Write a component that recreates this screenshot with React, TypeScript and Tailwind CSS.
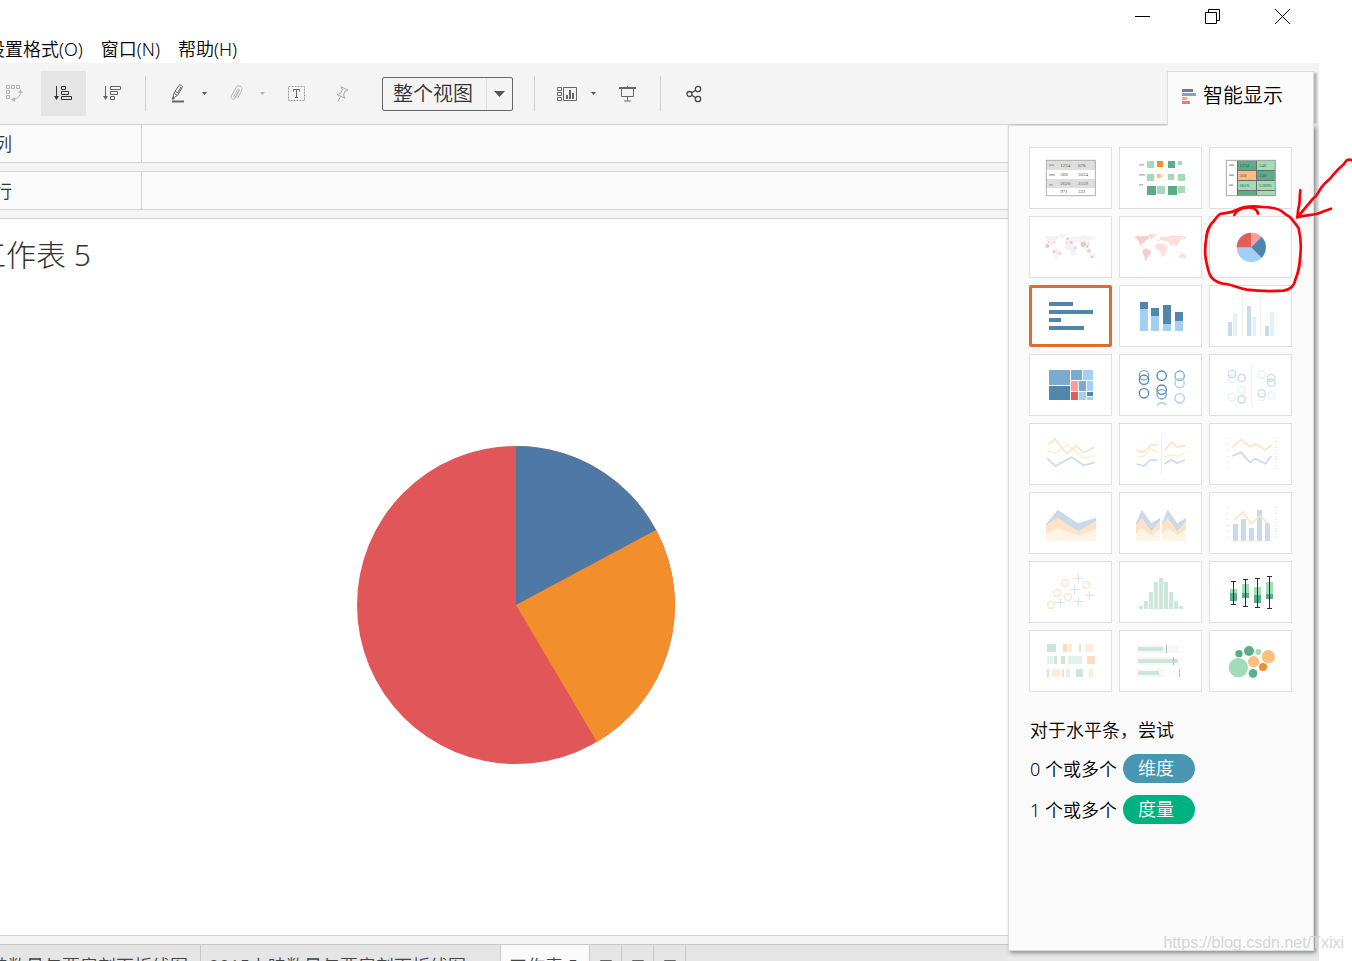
import type { ReactNode } from "react";
import clsx from "clsx";

const DARK_BLUE = "#5086ae";
const MID_BLUE = "#7baacf";
const LIGHT_BLUE = "#a5cff0";
const DARK_GREEN = "#59ad8a";
const LIGHT_GREEN = "#a0dcb6";
const PEACH = "#ffbe7d";
const ORANGE = "#f28e2b";
const PALE_BLUE = "#cbdae8";
const PALE_SKY = "#e3f1fc";
const PALE_ORANGE = "#fee3c8";
const PALE_YELLOW = "#fff0d4";
const PALE_GREEN = "#cde6dc";

const WORLD =
  "M48 62l6-3 9 3 9-2 8 1 6-2 5 6-2 5-6 1-4 5-4 5-5 1-3 5 5 5 6 4-6-2-9-8-4-10-4-6-4-4zM88 57l8-3 17 0-3 7-9 6-5 2-3-7zM73 99l10-1 13 8-2 9-8 8-5 13-3-3-1-12-7-12zM111 84l8-2 13 1 8 5 7 7-4 5-3 14-6 7-5 1-5-12-4-8-8-2-4-6zM113 78l2-6 5-1 4-8 8-3 6 3 12-2 14-4 12 3 14 0 12 3-2 5-6 0-5 6-2-4-5 3-1 8-6 3-3 10-5-7-4-4-3 10-5-7-6-7-8-3-8-1-4-3-7 2zM177 66l7 4-2 8-3-5zM170 104l5 4-4 2zM178 108l8 0 0 3zM181 119l5-5 5-1 3-2 6 7 2 6-6 4-6-4-9 2z";

type Rect = [number, number, number, number, string];

const Rects = ({ items }: { items: Rect[] }) => (
  <>
    {items.map(([x, y, w, h, fill]) => (
      <rect key={`${x}-${y}-${w}`} x={x} y={y} width={w} height={h} fill={fill} />
    ))}
  </>
);

type Circle = [number, number, number, string];

const Dots = ({ items }: { items: Circle[] }) => (
  <>
    {items.map(([cx, cy, r, fill]) => (
      <circle key={`${cx}-${cy}`} cx={cx} cy={cy} r={r} fill={fill} />
    ))}
  </>
);

const Rings = ({ items }: { items: Circle[] }) => (
  <>
    {items.map(([cx, cy, r, stroke]) => (
      <circle key={`${cx}-${cy}`} cx={cx} cy={cy} r={r} fill="none" stroke={stroke} strokeWidth="4" />
    ))}
  </>
);

const Line = ({ points, color }: { points: string; color: string }) => (
  <polyline points={points} fill="none" stroke={color} strokeWidth="5" />
);

const Divider = ({ x }: { x: number }) => <rect x={x - 1} y="33" width="3" height="120" fill="#eeeeee" />;

const Labels = ({ items }: { items: [number, number, string][] }) => (
  <g fontSize="15" fill="#555555" fontFamily="Liberation Serif, serif">
    {items.map(([x, y, text]) => (
      <text key={`${x}-${y}`} x={x} y={y}>
        {text}
      </text>
    ))}
  </g>
);

// axis ticks left and right of the dual charts
const Ticks = () => (
  <path
    d="M51 46h9M51 64h9M51 82h9M51 100h9M51 118h9M51 136h9M195 46h9M195 55h9M195 64h9M195 73h9M195 82h9M195 91h9M195 100h9M195 109h9M195 118h9M195 127h9M195 136h9"
    stroke="#ececec"
    strokeWidth="3"
  />
);

const charts: { name: string; art: ReactNode }[] = [
  {
    name: "文本表",
    art: (
      <>
        <Rects items={[[51, 39, 150, 30, "#dedede"], [51, 96, 150, 27, "#dedede"], [60, 52, 15, 5, "#b0b0b0"], [60, 81, 18, 5, "#b0b0b0"], [60, 111, 12, 5, "#b0b0b0"]]} />
        <rect x="52" y="40" width="147" height="106" fill="none" stroke="#b0b0b0" strokeWidth="3" />
        <Labels items={[[94, 61, "1234"], [147, 61, "678"], [94, 88, "368"], [147, 88, "3034"], [94, 115, "2620"], [147, 115, "2559"], [94, 139, "971"], [147, 139, "322"]]} />
      </>
    ),
  },
  {
    name: "热图",
    art: (
      <Rects
        items={[
          [60, 51, 15, 5, "#bfbfbf"], [60, 81, 18, 5, "#bfbfbf"], [60, 111, 12, 5, "#bfbfbf"],
          [84, 42, 21, 21, LIGHT_GREEN], [114, 42, 18, 18, ORANGE], [147, 42, 21, 21, DARK_GREEN], [177, 42, 12, 12, LIGHT_GREEN],
          [84, 81, 21, 21, LIGHT_GREEN], [114, 81, 12, 12, PEACH], [147, 81, 18, 18, LIGHT_GREEN], [177, 81, 21, 21, LIGHT_GREEN],
          [84, 117, 27, 27, DARK_GREEN], [114, 117, 24, 24, LIGHT_GREEN], [147, 117, 27, 27, DARK_GREEN], [177, 117, 21, 21, LIGHT_GREEN],
        ]}
      />
    ),
  },
  {
    name: "突出显示表",
    art: (
      <>
        <Rects
          items={[
            [84, 40, 116, 107, "#6f6f6f"],
            [60, 52, 15, 5, "#b0b0b0"], [60, 82, 15, 5, "#b0b0b0"], [60, 112, 12, 5, "#b0b0b0"],
            [87, 42, 54, 27, DARK_GREEN], [144, 42, 54, 27, LIGHT_GREEN],
            [87, 72, 54, 27, PEACH], [144, 72, 54, 27, DARK_GREEN],
            [87, 102, 54, 27, LIGHT_GREEN], [144, 102, 54, 27, LIGHT_GREEN],
            [87, 132, 54, 12, DARK_GREEN], [144, 132, 54, 12, LIGHT_GREEN],
          ]}
        />
        <rect x="52" y="40" width="147" height="106" fill="none" stroke="#a8a8a8" strokeWidth="3" />
        <Labels items={[[91, 60, "1234"], [150, 60, "546"], [91, 91, "368"], [150, 91, "340"], [91, 121, "2620"], [150, 121, "53890"]]} />
      </>
    ),
  },
  {
    name: "符号地图",
    art: (
      <>
        <path d={WORLD} fill="#f3f3f3" />
        <Dots
          items={[
            [55, 90, 6, "#ecc2c6"], [58, 78, 3, "#ecc2c6"], [75, 80, 4, "#f8d7d7"], [116, 68, 5, "#f2cfd1"], [113, 80, 4, "#f8d7d7"],
            [127, 79, 5, "#ecc2c6"], [75, 107, 4, "#ecc2c6"], [93, 112, 5, "#f8d7d7"], [138, 96, 4, "#f5cfd0"], [163, 85, 8, "#ecc2c6"],
            [175, 92, 4, "#ecc2c6"], [180, 104, 6, "#f5cfd0"], [178, 84, 3, "#f5cfd0"], [189, 123, 4, "#f0c5c8"],
          ]}
        />
      </>
    ),
  },
  {
    name: "地图",
    art: (
      <>
        <path d={WORLD} fill="#ffdedd" />
        <path d={WORLD} fill="#f6cfcd" clipPath="inset(0 105px 0 0)" />
      </>
    ),
  },
  {
    name: "饼图",
    art: (
      <>
        <circle cx="127" cy="94" r="44" fill={LIGHT_BLUE} />
        <path d="M127 94H83A44 44 0 0 1 127 50Z" fill="#e15f56" />
        <path d="M127 94V50A44 44 0 0 1 158 63Z" fill="#ff9d9a" />
        <path d="M127 94L158 63A44 44 0 0 1 158 125Z" fill={DARK_BLUE} />
      </>
    ),
  },
  {
    name: "水平条",
    art: <Rects items={[[60, 51, 72, 12, DARK_BLUE], [60, 75, 132, 12, DARK_BLUE], [60, 99, 36, 12, DARK_BLUE], [60, 123, 105, 12, DARK_BLUE]]} />,
  },
  {
    name: "堆叠条",
    art: (
      <Rects
        items={[
          [63, 51, 24, 21, DARK_BLUE], [63, 72, 24, 66, LIGHT_BLUE], [96, 69, 24, 24, DARK_BLUE], [96, 93, 24, 45, LIGHT_BLUE],
          [132, 60, 24, 57, DARK_BLUE], [132, 117, 24, 21, LIGHT_BLUE], [168, 81, 24, 27, DARK_BLUE], [168, 108, 24, 30, LIGHT_BLUE],
        ]}
      />
    ),
  },
  {
    name: "并排条",
    art: (
      <>
        <Divider x={100} />
        <Divider x={154} />
        <Rects
          items={[
            [57, 111, 12, 42, PALE_BLUE], [72, 84, 12, 69, PALE_SKY], [114, 63, 12, 90, PALE_BLUE],
            [129, 96, 12, 57, PALE_SKY], [168, 123, 12, 30, PALE_BLUE], [183, 81, 12, 72, PALE_SKY],
          ]}
        />
      </>
    ),
  },
  {
    name: "树状图",
    art: (
      <Rects
        items={[
          [60, 48, 63, 45, MID_BLUE], [60, 96, 63, 42, DARK_BLUE], [126, 48, 33, 30, MID_BLUE], [162, 48, 30, 30, LIGHT_BLUE],
          [126, 81, 21, 30, "#ff9d9a"], [150, 81, 21, 30, MID_BLUE], [174, 81, 18, 30, LIGHT_BLUE], [126, 114, 21, 24, "#e15f56"],
          [150, 114, 21, 24, LIGHT_BLUE], [174, 114, 18, 12, DARK_BLUE], [174, 129, 18, 9, LIGHT_BLUE],
        ]}
      />
    ),
  },
  {
    name: "圆视图",
    art: (
      <>
        <Rings
          items={[
            [75, 64, 14, MID_BLUE], [75, 77, 14, DARK_BLUE], [75, 118, 14, DARK_BLUE], [128, 65, 14, DARK_BLUE], [128, 107, 14, DARK_BLUE],
            [128, 121, 14, MID_BLUE], [182, 65, 14, MID_BLUE], [182, 87, 14, LIGHT_BLUE], [182, 133, 14, LIGHT_BLUE],
          ]}
        />
        <path d="M115 155a14 12 0 0 1 27 0" fill="none" stroke={LIGHT_BLUE} strokeWidth="4" />
      </>
    ),
  },
  {
    name: "并排圆",
    art: (
      <>
        <Divider x={127} />
        <Rings
          items={[
            [69, 74, 11, PALE_SKY], [69, 60, 11, PALE_BLUE], [98, 72, 11, PALE_BLUE], [98, 107, 11, PALE_SKY], [69, 130, 11, PALE_SKY],
            [98, 136, 11, PALE_BLUE], [158, 61, 11, PALE_SKY], [187, 86, 11, PALE_BLUE], [187, 72, 11, PALE_BLUE], [158, 129, 11, PALE_SKY],
            [158, 118, 11, PALE_BLUE], [187, 124, 11, PALE_SKY],
          ]}
        />
      </>
    ),
  },
  {
    name: "线(连续)",
    art: (
      <>
        <Line points="55,83 79,91 113,65 165,106 197,98" color={PALE_YELLOW} />
        <Line points="57,65 78,48 113,92 142,69 164,89 197,73" color={PALE_ORANGE} />
        <Line points="55,106 79,129 128,103 165,127 197,118" color={PALE_BLUE} />
      </>
    ),
  },
  {
    name: "线(离散)",
    art: (
      <>
        <Divider x={127} />
        <Line points="53,82 75,87 96,65 116,67" color={PALE_ORANGE} />
        <Line points="53,103 75,99 96,77 115,90" color={PALE_YELLOW} />
        <Line points="53,123 75,129 94,111 116,112" color={PALE_BLUE} />
        <Line points="137,82 157,58 175,72 198,68" color={PALE_ORANGE} />
        <Line points="135,103 158,95 177,100 198,88" color={PALE_YELLOW} />
        <Line points="137,123 157,110 175,120 198,111" color={PALE_BLUE} />
      </>
    ),
  },
  {
    name: "双线",
    art: (
      <>
        <Ticks />
        <Line points="70,73 96,50 123,72 139,62 169,81 187,66" color={PALE_ORANGE} />
        <Line points="70,99 96,88 123,118 139,107 169,122 187,99" color={PALE_BLUE} />
      </>
    ),
  },
  {
    name: "面积图(连续)",
    art: (
      <>
        <path d="M51 96L86 53L147 94L201 77V147H51Z" fill={PALE_BLUE} />
        <path d="M51 100L86 77L148 118L201 86V147H51Z" fill={PALE_ORANGE} />
        <path d="M51 124L86 109L148 130L201 112V147H51Z" fill="#fff4e6" />
      </>
    ),
  },
  {
    name: "面积图(离散)",
    art: (
      <>
        <path d="M51 94L68 53L97 94L123 77V147H51ZM129 94L146 53L175 94L201 77V147H129Z" fill={PALE_BLUE} />
        <path d="M51 100L68 77L97 118L123 86V147H51ZM129 100L146 77L175 118L201 86V147H129Z" fill={PALE_ORANGE} />
        <path d="M51 124L68 109L97 130L123 112V147H51ZM129 124L146 109L175 130L201 112V147H129Z" fill="#fff4e6" />
      </>
    ),
  },
  {
    name: "双组合",
    art: (
      <>
        <Ticks />
        <Rects items={[[72, 96, 15, 51, PALE_BLUE], [96, 81, 15, 66, PALE_BLUE], [120, 108, 15, 39, PALE_BLUE], [144, 54, 15, 93, PALE_BLUE], [168, 93, 15, 54, PALE_BLUE]]} />
        <Line points="76,85 102,60 127,96 152,71 181,97" color={PALE_ORANGE} />
      </>
    ),
  },
  {
    name: "散点图",
    art: (
      <>
        <Rings items={[[66, 132, 10, PALE_ORANGE], [84, 96, 10, PALE_ORANGE], [117, 108, 10, PALE_ORANGE], [108, 66, 10, PALE_ORANGE], [171, 72, 10, PALE_ORANGE]]} />
        <path
          d="M81 124h27M94 111v27M123 85h27M136 72v27M135 52h27M148 39v27M168 103h27M181 90v27M135 121h27M148 108v27"
          stroke={PALE_GREEN}
          strokeWidth="3"
        />
      </>
    ),
  },
  {
    name: "直方图",
    art: (
      <Rects
        items={[
          [60, 135, 12, 9, PALE_GREEN], [75, 120, 12, 24, PALE_GREEN], [90, 93, 12, 51, PALE_GREEN], [105, 63, 12, 81, PALE_GREEN], [120, 51, 12, 93, PALE_GREEN],
          [135, 63, 12, 81, PALE_GREEN], [150, 93, 12, 51, PALE_GREEN], [165, 120, 12, 24, PALE_GREEN], [180, 135, 12, 9, PALE_GREEN],
        ]}
      />
    ),
  },
  {
    name: "盒须图",
    art: (
      <>
        <Rects
          items={[
            [63, 84, 21, 12, LIGHT_GREEN], [63, 96, 21, 24, DARK_GREEN], [99, 69, 21, 27, LIGHT_GREEN], [99, 96, 21, 15, DARK_GREEN],
            [135, 78, 21, 24, LIGHT_GREEN], [135, 102, 21, 24, DARK_GREEN], [171, 63, 21, 36, LIGHT_GREEN], [171, 99, 21, 15, DARK_GREEN],
          ]}
        />
        <path
          d="M66 61.5h15M66 130.5h15M73.500 61v70M102 55.500h15M102 136.500h15M109.500 55v82M138 52.500h15M138 139.500h15M145.500 52v88M174 46.500h15M174 142.500h15M181.500 46v97"
          stroke="#2f2f2f"
          strokeWidth="3"
        />
      </>
    ),
  },
  {
    name: "甘特图",
    art: (
      <Rects
        items={[
          [54, 42, 27, 24, PALE_GREEN], [102, 42, 12, 24, "#fbdcc0"], [117, 42, 12, 24, "#ffecd8"], [150, 42, 6, 24, "#fbdcc0"], [168, 42, 24, 24, "#ffecd8"],
          [54, 78, 18, 24, "#e1f3e8"], [75, 78, 9, 24, PALE_GREEN], [96, 78, 12, 24, PALE_GREEN], [117, 78, 42, 24, "#e1f3e8"], [174, 78, 24, 24, "#fbdcc0"],
          [54, 117, 6, 24, PALE_GREEN], [69, 117, 24, 24, "#ffecd8"], [99, 117, 6, 24, "#fbdcc0"], [111, 117, 12, 24, "#e1f3e8"], [141, 117, 21, 24, PALE_GREEN], [180, 117, 12, 24, "#ffecd8"],
        ]}
      />
    ),
  },
  {
    name: "标靶图",
    art: (
      <Rects
        items={[
          [57, 45, 138, 24, "#fcfcfc"], [57, 81, 138, 24, "#fcfcfc"], [57, 117, 126, 24, "#fcfcfc"],
          [57, 45, 120, 24, "#f7f7f7"], [57, 81, 105, 24, "#f7f7f7"], [57, 117, 75, 24, "#f7f7f7"],
          [57, 51, 75, 12, PALE_GREEN], [57, 87, 120, 12, PALE_GREEN], [57, 123, 63, 12, PALE_GREEN],
          [141, 45, 3, 24, "#bdbdbd"], [162, 81, 3, 24, "#bdbdbd"], [180, 117, 3, 24, "#bdbdbd"],
        ]}
      />
    ),
  },
  {
    name: "填充气泡图",
    art: (
      <Dots
        items={[
          [88, 113, 29, LIGHT_GREEN], [90, 71, 11, DARK_GREEN], [120, 63, 15, DARK_GREEN], [148, 66, 9, LIGHT_GREEN],
          [178, 80, 20, PEACH], [134, 95, 17, PEACH], [162, 111, 12, ORANGE], [132, 130, 13, DARK_GREEN],
        ]}
      />
    ),
  },
];

const ToolButton = ({ label, children }: { label: string; children: ReactNode }) => (
  <button aria-label={label} className="flex h-8 w-8 items-center justify-center">
    {children}
  </button>
);

const CaretButton = ({ label, muted }: { label: string; muted?: boolean }) => (
  <button aria-label={label} className={clsx("flex h-8 w-5 items-center justify-center", muted ? "text-[#b4b4b4]" : "text-[#555]")}>
    <svg width="5" height="3" viewBox="0 0 5 3" fill="currentColor">
      <path d="M0 0h5L2.500 3z" />
    </svg>
  </button>
);

const Separator = () => <div className="h-[35px] w-px bg-[#d2d2d2]" />;

const SortIcon = ({ descending }: { descending?: boolean }) => (
  <svg width="19" height="15" viewBox="0 0 19 15" fill="none" stroke="currentColor">
    <path d="M2.500 0v11" />
    <path d="M0 10h5L2.500 14z" fill="currentColor" stroke="none" />
    {descending ? <path d="M7.500.5h10v3h-10zM7.500 5.500h7v3h-7zM7.500 10.500h4v3h-4z" /> : <path d="M7.500.5h4v3h-4zM7.500 5.500h7v3h-7zM7.500 10.500h10v3h-10z" />}
  </svg>
);

const Toolbar = () => (
  <div className="flex h-full flex-1 items-center border-b border-[#d2d2d2] text-[#666]">
    <div className="-ml-2 flex gap-1">
      <button aria-label="交换行和列" className="flex size-[45px] items-center justify-center text-[#b4b4b4]">
        <svg width="18" height="18" viewBox="0 0 18 18" fill="none" stroke="currentColor">
          <path d="M.5.5h3v3h-3zM5.500.5h3v3h-3zM10.500.5h3v3h-3zM.5 5.500h3v3h-3zM.5 10.500h3v3h-3zM14.500 7c0 4-3 7-7 7.500" />
          <path d="M12 8h5l-2.500-3.500zM9 12v5l-4-2.500z" fill="currentColor" stroke="none" />
        </svg>
      </button>
      <button aria-label="升序排序" className="flex size-[45px] items-center justify-center bg-[#e5e5e5] text-[#333]">
        <SortIcon />
      </button>
      <button aria-label="降序排序" className="flex size-[45px] items-center justify-center">
        <SortIcon descending />
      </button>
    </div>
    <div className="ml-2.5 flex items-center">
      <Separator />
    </div>
    <div className="ml-4 flex">
      <ToolButton label="突出显示">
        <svg width="14" height="19" viewBox="0 0 14 19" fill="none" stroke="currentColor">
          <path d="M3 9L8 1.200Q8.500.5 9.300 1L11 2Q11.800 2.500 11.300 3.300L6.500 11.500L3 9.300zM3 9.500L2 12.500L3.500 13.500L6 11.500M4.500 7.500L8 9.500M7 8.500L10 3" />
          <path d="M2.200 12.800L1 15h2z" fill="currentColor" />
          <path d="M1 17.500h12" strokeWidth="2" />
        </svg>
      </ToolButton>
      <CaretButton label="突出显示选项" />
    </div>
    <div className="ml-1.5 flex text-[#b4b4b4]">
      <ToolButton label="组成员">
        <svg width="13" height="17" viewBox="0 0 13 17" fill="none" stroke="currentColor" strokeLinecap="round">
          <path d="M4 11L7.500 4.500C8.200 3.300 10 4.200 9.400 5.500L5.500 13C4.200 15.300.2 14 1.500 10.700L6 2.500C7.800-.7 13.200 1.200 11.800 5L8 12.500M4 11C3.500 12.500 5 13 5.500 12L8.500 6" />
        </svg>
      </ToolButton>
      <CaretButton label="组成员选项" muted />
    </div>
    <div className="ml-2 flex gap-3.5">
      <ToolButton label="显示标记标签">
        <svg width="17" height="15" viewBox="0 0 17 15" fill="none" stroke="currentColor">
          <rect x=".5" y=".5" width="16" height="14" stroke="#999" strokeDasharray="2 1" />
          <path d="M5.500 5.500V3.500h6v2M8.500 3.500v8M7 11.500h3" />
        </svg>
      </ToolButton>
      <button aria-label="固定" className="flex h-8 w-8 items-center justify-center text-[#a8a8a8]">
        <svg width="13" height="16" viewBox="0 0 13 16" fill="none" stroke="currentColor">
          <path d="M5 .8L12 4L11 5L9.300 4.800L7.500 9L9 12.200L1 8.500L4.500 7.500L6.300 3.500L5 .8zM4.500 10.500L2 15.500" />
        </svg>
      </button>
    </div>
    <div className="relative ml-6 h-[34px] w-[131px] text-[#333]">
      <select aria-label="适合" className="h-full w-full appearance-none rounded-xs border border-[#666] bg-[#f4f4f4] pl-2.5 text-xl leading-8">
        <option>整个视图</option>
      </select>
      <div className="pointer-events-none absolute inset-y-px right-px flex w-[26px] items-center justify-center border-l border-[#dcdcdc] text-[#555]">
        <svg width="11" height="6" viewBox="0 0 11 6" fill="currentColor">
          <path d="M0 0h11L5.500 6z" />
        </svg>
      </div>
    </div>
    <div className="ml-[21px] flex items-center gap-4">
      <Separator />
      <div className="flex">
        <ToolButton label="显示/隐藏卡">
          <svg width="21" height="14" viewBox="0 0 21 14" fill="none" stroke="currentColor">
            <path d="M.5.5h4v3h-4zM.5 5.500h4v3h-4zM.5 10.500h4v3h-4zM6.500.5h13v13h-13z" />
            <path d="M9 8h2v4H9zM12 3h2v9h-2zM15 6h2v6h-2z" fill="currentColor" stroke="none" />
          </svg>
        </ToolButton>
        <CaretButton label="显示/隐藏卡选项" />
      </div>
    </div>
    <div className="ml-2 flex items-center gap-[17px]">
      <ToolButton label="演示模式">
        <svg width="17" height="16" viewBox="0 0 17 16" fill="none" stroke="currentColor">
          <path d="M0 2h17" strokeWidth="2" />
          <path d="M8.500 0v2M2.500 3v7.500h12V3M8.500 10.500v4M5 15h7" />
        </svg>
      </ToolButton>
      <Separator />
      <button aria-label="共享" className="flex h-8 w-8 items-center justify-center text-[#444]">
        <svg width="16" height="18" viewBox="0 0 16 18" fill="none" stroke="currentColor" strokeWidth="1.300">
          <circle cx="3.500" cy="9" r="2.500" />
          <circle cx="12" cy="4" r="2.700" />
          <circle cx="12" cy="14" r="2.700" />
          <path d="M5.700 7.800L9.700 5.300M5.700 10.200L9.700 12.700" />
        </svg>
      </button>
    </div>
  </div>
);

const Shelf = ({ label }: { label: string }) => (
  <div className="flex h-[38px] items-stretch border-b border-[#d2d2d2] bg-[#fafafa] text-lg">
    <div className="flex w-[142px] items-center border-r border-[#d2d2d2] text-[#333]">
      <span className="-ml-1.5">{label}</span>
    </div>
  </div>
);

const PieChart = () => (
  <svg width="318" height="318" viewBox="-159 -159 318 318">
    <circle r="159" fill="#e15759" />
    <path d="M0 0V-159A159 159 0 0 1 140 -75Z" fill="#4e79a7" />
    <path d="M0 0L140 -75A159 159 0 0 1 81 137Z" fill="#f28e2b" />
  </svg>
);

const SheetTabs = () => (
  <div className="h-[26px] shrink-0 overflow-hidden border-t border-[#d2d2d2] bg-[#f4f4f4] pt-2">
    <div className="flex h-[42px] border-t border-[#c8c8c8] bg-[#e5e5e5] text-lg text-[#444]">
      <button className="flex w-[201px] items-center justify-end border-r border-[#c8c8c8] pr-3 whitespace-nowrap">
        2014上映数量与票房剖面折线图
      </button>
      <button className="flex w-[300px] items-center border-r border-[#c8c8c8] pl-2 whitespace-nowrap">
        2015上映数量与票房剖面折线图
      </button>
      <button className="flex w-[89px] items-center border-r border-[#c8c8c8] bg-[#fafafa] pl-2 whitespace-nowrap">工作表 5</button>
      {["新建工作表", "新建仪表板", "新建故事"].map((label) => (
        <button key={label} aria-label={label} className="flex w-8 justify-center border-r border-[#c8c8c8] pt-[15px]">
          <svg width="12" height="14" viewBox="0 0 12 14" fill="none" stroke="#666">
            <path d="M.5.5h11v11H.5zM.5 4.500h11M6 7v4" />
          </svg>
        </button>
      ))}
    </div>
  </div>
);

const ShowMe = () => (
  <aside className="flex-1 border border-[#dcdcdc] bg-[#fafafa] pt-[21px] pl-5 text-lg text-black shadow-[2px_2px_4px_rgba(0,0,0,0.4)]">
    <div className="grid grid-cols-[repeat(3,83px)] gap-[7px]">
      {charts.map(({ name, art }) => (
        <button
          key={name}
          aria-label={name}
          className={clsx("h-[62px] bg-white ring-inset", name === "水平条" ? "rounded-xs ring-3 ring-[#de6b35]" : "ring-1 ring-[#dfdfdf]")}
        >
          <svg width="83" height="62" viewBox="0 0 249 186">
            {art}
          </svg>
        </button>
      ))}
    </div>
    <div className="pt-6 pl-px">
      <p className="leading-7">对于水平条，尝试</p>
      <div className="mt-2.5 flex items-center gap-1.5">
        <span>0 个或多个</span>
        <span className="h-[29px] w-[72px] rounded-full bg-[#4996b2] pl-[15px] leading-7 text-white">维度</span>
      </div>
      <div className="mt-3 flex items-center gap-1.5">
        <span>1 个或多个</span>
        <span className="h-[29px] w-[72px] rounded-full bg-[#00b180] pl-[15px] leading-7 text-white">度量</span>
      </div>
    </div>
  </aside>
);

// hand-drawn arrow and loop around the pie thumbnail
const Marker = () => (
  <svg
    className="pointer-events-none absolute top-[150px] right-0 z-20"
    width="152"
    height="150"
    viewBox="0 0 456 450"
    fill="none"
    stroke="#fb0006"
    strokeWidth="8"
    strokeLinecap="round"
    strokeLinejoin="round"
  >
    <path d="M60 192C48 200 45 212 35 220C22 236 20 250 18 270C14 295 15 320 20 340C24 362 28 380 40 388C54 398 62 402 80 402C100 406 112 414 140 419C176 424 220 424 250 422C276 418 284 404 287 386C298 362 300 340 302 300C304 276 300 254 296 235C290 224 282 216 274 206C266 196 258 196 250 188C240 178 220 172 190 171C160 168 140 168 124 174C108 180 98 188 84 188Z" />
    <path d="M103 195C108 184 116 176 138 173C158 170 172 178 174 191" />
    <path d="M456 31C446 26 438 30 432 42C420 52 408 64 398 76C390 90 376 96 368 108C358 118 356 130 346 140C338 144 334 154 324 164L292 202" />
    <path d="M301 121C298 140 301 160 295 175L292 202C312 196 330 196 350 192C368 186 380 180 393 176" />
  </svg>
);

const App = () => {
  return (
    <div
      lang="zh-CN"
      className="relative flex h-screen flex-col overflow-hidden bg-white pr-[33px] font-['Noto_Sans','Noto_Sans_CJK_SC',sans-serif] font-[350] text-black"
    >
      <header className="h-[63px] shrink-0">
        <div className="flex h-[33px] justify-end pr-0.5">
          <button aria-label="最小化" className="flex w-[70px] items-center justify-center">
            <svg width="15" height="15" viewBox="0 0 15 15" stroke="black">
              <path d="M0 7.500h15" />
            </svg>
          </button>
          <button aria-label="还原" className="flex w-[70px] items-center justify-center">
            <svg width="15" height="15" viewBox="0 0 15 15" fill="none" stroke="black">
              <path d="M.5 3.500h11v11H.5zM3.500 3.500V.5h11v11h-3" />
            </svg>
          </button>
          <button aria-label="关闭" className="flex w-[70px] items-center justify-center">
            <svg width="15" height="15" viewBox="0 0 15 15" stroke="black">
              <path d="M0 0l15 15M15 0L0 15" />
            </svg>
          </button>
        </div>
        <nav className="-ml-[13px] flex h-[30px] items-center gap-[18px] pt-0.5 text-lg">
          <button>设置格式(O)</button>
          <button>窗口(N)</button>
          <button>帮助(H)</button>
        </nav>
      </header>

      <div className="flex h-[62px] shrink-0 items-end bg-[#f4f4f4] pr-[5px]">
        <Toolbar />
        <button className="relative z-10 -mb-px flex h-[55px] w-[147px] items-center gap-1.5 border border-b-0 border-[#dcdcdc] bg-[#fafafa] pb-1.5 pl-3.5 text-xl shadow-[5px_0_2px_-2px_rgba(0,0,0,0.25)]">
          <svg width="15" height="15" viewBox="0 0 15 15">
            <path d="M0 0h11v3H0z" fill="#86709a" />
            <path d="M0 4h14v3H0z" fill="#7ea3cf" />
            <path d="M0 8h5v3H0z" fill="#f4a582" />
            <path d="M0 12h8v3H0z" fill="#f6707f" />
          </svg>
          智能显示
        </button>
      </div>

      <div className="flex min-h-0 flex-1">
        <main className="flex min-w-0 flex-1 flex-col bg-[#f4f4f4]">
          <Shelf label="列" />
          <div className="mt-2 border-t border-[#d2d2d2]">
            <Shelf label="行" />
          </div>
          <section className="mt-2 flex min-h-0 flex-1 flex-col border-t border-[#d2d2d2] bg-white">
            <h1 className="-ml-6 pt-4 text-3xl leading-10 font-light text-[#333]">工作表 5</h1>
            <div className="flex flex-1 items-center justify-center pl-6">
              <PieChart />
            </div>
          </section>
          <SheetTabs />
        </main>
        <div className="flex w-[311px] shrink-0 bg-[#e9e9e9] pr-[5px] pb-2.5">
          <ShowMe />
        </div>
      </div>

      <Marker />
      <span className="absolute right-2 bottom-1.5 z-20 font-['Liberation_Sans',sans-serif] text-base leading-6 font-normal text-[#d6d6d6]">
        https://blog.csdn.net/Txixi
      </span>
    </div>
  );
};

export default App;
